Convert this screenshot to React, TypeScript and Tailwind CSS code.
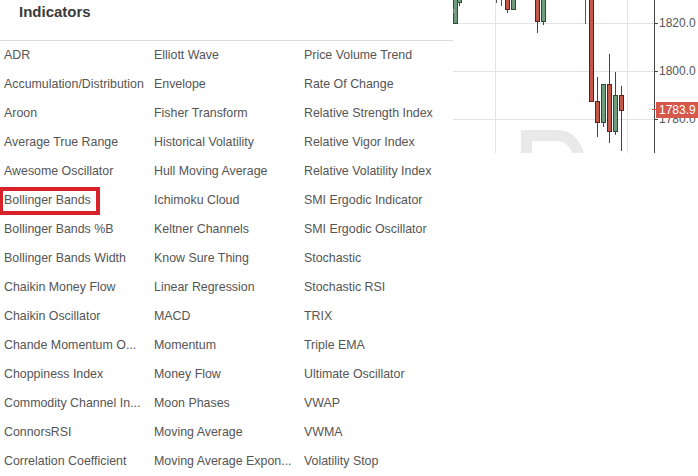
import React from "react";

const col1 = [
  "ADR",
  "Accumulation/Distribution",
  "Aroon",
  "Average True Range",
  "Awesome Oscillator",
  "Bollinger Bands",
  "Bollinger Bands %B",
  "Bollinger Bands Width",
  "Chaikin Money Flow",
  "Chaikin Oscillator",
  "Chande Momentum O...",
  "Choppiness Index",
  "Commodity Channel In...",
  "ConnorsRSI",
  "Correlation Coefficient",
];
const col2 = [
  "Elliott Wave",
  "Envelope",
  "Fisher Transform",
  "Historical Volatility",
  "Hull Moving Average",
  "Ichimoku Cloud",
  "Keltner Channels",
  "Know Sure Thing",
  "Linear Regression",
  "MACD",
  "Momentum",
  "Money Flow",
  "Moon Phases",
  "Moving Average",
  "Moving Average Expon...",
];
const col3 = [
  "Price Volume Trend",
  "Rate Of Change",
  "Relative Strength Index",
  "Relative Vigor Index",
  "Relative Volatility Index",
  "SMI Ergodic Indicator",
  "SMI Ergodic Oscillator",
  "Stochastic",
  "Stochastic RSI",
  "TRIX",
  "Triple EMA",
  "Ultimate Oscillator",
  "VWAP",
  "VWMA",
  "Volatility Stop",
];

type Candle = { x: number; o: number; c: number; hi: number; lo: number; up: boolean };

// chart-local coordinates (origin x=453)
const candles: Candle[] = [
  { x: 0, o: -5, c: 23, hi: -5, lo: 23, up: true },
  { x: 4, o: -5, c: 2, hi: -5, lo: 6, up: true },
  { x: 52, o: -5, c: 9, hi: -5, lo: 13, up: false },
  { x: 58, o: -5, c: 9, hi: -5, lo: 9, up: true },
  { x: 82, o: -5, c: 21, hi: -5, lo: 33, up: false },
  { x: 88, o: -5, c: 21, hi: -5, lo: 25, up: true },
  { x: 136, o: -5, c: 101, hi: -5, lo: 101, up: false },
  { x: 142, o: 101, c: 122, hi: 77, lo: 137, up: false },
  { x: 148, o: 84, c: 122, hi: 84, lo: 127, up: true },
  { x: 154, o: 84, c: 131, hi: 54, lo: 143, up: false },
  { x: 160, o: 95, c: 131, hi: 72, lo: 135, up: true },
  { x: 166, o: 95, c: 110, hi: 86, lo: 151, up: false },
];

function Chart() {
  return (
    <div className="relative w-[245px] h-[153px] shrink-0 bg-white">
      <svg width="245" height="153" className="absolute left-0 top-0">
        {/* watermark */}
        <path d="M73.5 131 V170" stroke="#e9e9e9" strokeWidth="11" fill="none" />
        <path d="M68 135.5 H104 C116 135.5 124 144 127 160" stroke="#e9e9e9" strokeWidth="11" fill="none" />
        {/* grid */}
        <line x1="0" y1="23.5" x2="201" y2="23.5" stroke="#e4e4e4" />
        <line x1="0" y1="71.5" x2="201" y2="71.5" stroke="#e4e4e4" />
        <line x1="0" y1="119.5" x2="201" y2="119.5" stroke="#e4e4e4" />
        <line x1="42.5" y1="0" x2="42.5" y2="153" stroke="#e4e4e4" />
        <line x1="174.5" y1="0" x2="174.5" y2="153" stroke="#e4e4e4" />
        {/* wicks only */}
        <line x1="43.5" y1="0" x2="43.5" y2="3" stroke="#555" />
        <line x1="48.5" y1="0" x2="48.5" y2="6" stroke="#555" />
        <line x1="132.5" y1="0" x2="132.5" y2="24" stroke="#555" />
        {candles.map((c, i) => {
          const top = Math.min(c.o, c.c);
          const h = Math.abs(c.c - c.o);
          return (
            <g key={i}>
              <line x1={c.x + 2.5} y1={c.hi} x2={c.x + 2.5} y2={c.lo} stroke="#444" />
              <rect
                x={c.x + 0.5}
                y={top + 0.5}
                width={4}
                height={h}
                fill={c.up ? "#6e9c7c" : "#c3584a"}
                stroke={c.up ? "#2f4a38" : "#5b2119"}
              />
            </g>
          );
        })}
        {/* marker */}
        <path d="M-3 7 L2 11 L-3 15" stroke="#999" strokeWidth="1.2" fill="none" />
        {/* axis */}
        <line x1="201.5" y1="0" x2="201.5" y2="153" stroke="#444" />
        <line x1="201" y1="23.5" x2="205" y2="23.5" stroke="#444" />
        <line x1="201" y1="71.5" x2="205" y2="71.5" stroke="#444" />
        <line x1="201" y1="119.5" x2="205" y2="119.5" stroke="#444" />
      </svg>
      <div className="absolute left-[206px] top-[15px] text-[12px] leading-[16px] text-[#555] font-['Liberation_Sans',Arial,sans-serif]">1820.0</div>
      <div className="absolute left-[206px] top-[63px] text-[12px] leading-[16px] text-[#555] font-['Liberation_Sans',Arial,sans-serif]">1800.0</div>
      <div className="absolute left-[206px] top-[111px] text-[12px] leading-[16px] text-[#555] font-['Liberation_Sans',Arial,sans-serif]">1780.0</div>
      <div className="absolute left-[199px] top-[109px] w-[4px] h-[1px] bg-[#d5584b]" />
      <div className="absolute left-[203px] top-[102px] w-[42px] h-[16px] bg-[#d5584b] text-white text-[12px] leading-[16px] pl-[3px] font-['Liberation_Sans',Arial,sans-serif]">
        1783.9
      </div>
    </div>
  );
}

function Column({ items }: { items: string[] }) {
  return (
    <div className="flex flex-col w-[150px]">
      {items.map((t) => (
        <div key={t} className="h-[29px] flex items-center pl-[4px] whitespace-nowrap relative">
          {t === "Bollinger Bands" && (
            <div className="absolute left-0 top-[1px] w-[100px] h-[28px] border-[4px] border-l-[3px] border-[#d7212b]" />
          )}
          <span className="relative">{t}</span>
        </div>
      ))}
    </div>
  );
}

export default function App() {
  return (
    <div className="w-[698px] h-[476px] overflow-hidden bg-white flex font-['Liberation_Sans',Arial,sans-serif]">
      <div className="w-[453px] shrink-0 flex flex-col">
        <div className="h-[38px] pt-[2px] pl-[19px] border-b border-[#dcdcdc] box-content">
          <div className="text-[15px] leading-[20px] font-bold text-[#3a3a3a]">Indicators</div>
        </div>
        <div className="flex text-[12.4px] text-[#555]">
          <Column items={col1} />
          <Column items={col2} />
          <Column items={col3} />
        </div>
      </div>
      <Chart />
    </div>
  );
}
